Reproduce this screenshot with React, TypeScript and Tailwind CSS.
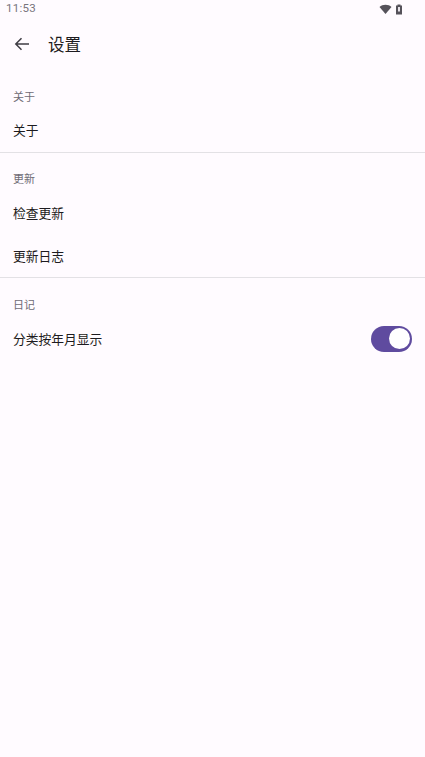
export default function App() {
  const font = { fontFamily: '"Roboto", "Noto Sans CJK SC", sans-serif' };
  const Header = ({ t, c }: { t: string; c: string }) => (
    <div className={`px-[13px] flex items-end text-[11px] leading-[16px] text-[#6f6b75] ${c}`}>{t}</div>
  );
  const Row = ({ t, c = "" }: { t: string; c?: string }) => (
    <div className={`h-[43px] px-[13px] flex items-center text-[12.75px] text-[#1d1b20] ${c}`}>{t}</div>
  );
  return (
    <div className="w-[425px] h-[757px] bg-[#fffbff] overflow-hidden flex flex-col" style={font}>
      <div className="h-[18px] pl-[6px] pr-[21px] flex items-center justify-between text-[11.5px] text-[#77747c]">
        <span className="tracking-[0.3px]">11:53</span>
        <div className="flex items-center gap-[3px] mr-[1px]">
          <svg width="13" height="10" viewBox="0 0 13 10"><path d="M0.5 3 C3.5 0 9.5 0 12.5 3 L6.5 10 Z" fill="#55525a" /></svg>
          <svg width="8" height="11" viewBox="0 0 8 11"><path d="M2.5 0.5 h3 v1 h1.5 v9 h-6 v-9 h1.5 Z" fill="#55525a" /><rect x="3" y="3" width="2" height="4.5" fill="#e8e4ea" /></svg>
        </div>
      </div>
      <div className="h-[53px] flex items-center pl-[14px]">
        <svg className="mb-[2px]" width="16" height="14" viewBox="0 0 16 14" fill="none" stroke="#3f3d44" strokeWidth="1.5"><path d="M15 7H2M7.5 1.2 1.8 7l5.7 5.8" /></svg>
        <span className="ml-[18px] pt-[3px] text-[16.5px] text-[#1d1b20]">设置</span>
      </div>
      <Header t="关于" c="h-[38px] pb-[3px]" />
      <Row t="关于" />
      <div className="h-px bg-[#e3e1e5]" />
      <Header t="更新" c="h-[38px] pb-[3px]" />
      <Row t="检查更新" c="pt-[2px]" />
      <Row t="更新日志" c="pt-[2px]" />
      <div className="h-px bg-[#e3e1e5]" />
      <Header t="日记" c="h-[39px] pb-[3px]" />
      <div className="h-[43px] pl-[13px] pr-[13px] flex items-center justify-between text-[12.75px] text-[#1d1b20]">
        <span className="pt-[2px]">分类按年月显示</span>
        <div className="w-[41px] h-[26px] rounded-full bg-[#5f4b9f] flex items-center justify-end pr-[2px]">
          <div className="w-[21px] h-[21px] rounded-full bg-white" />
        </div>
      </div>
    </div>
  );
}
